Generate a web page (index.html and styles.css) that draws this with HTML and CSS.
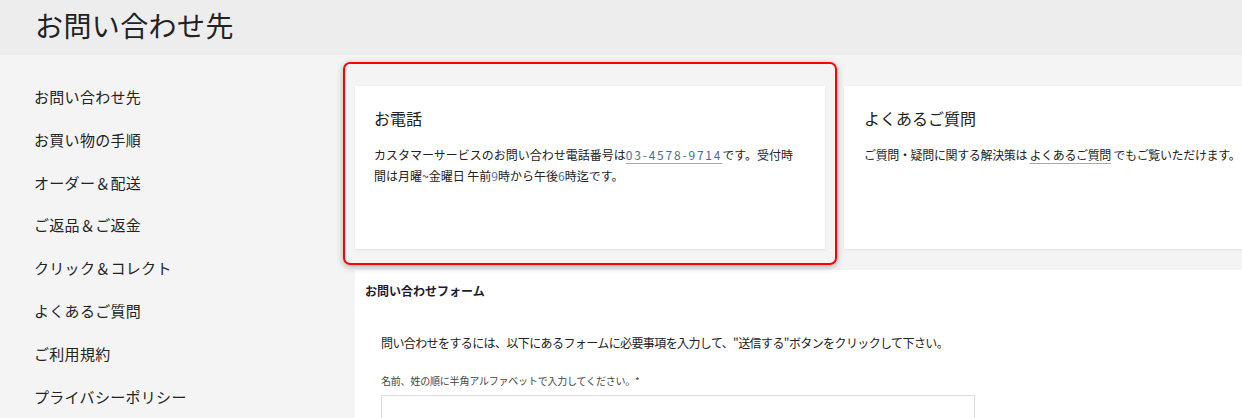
FILE: index.html
```html
<!DOCTYPE html>
<html lang="ja">
<head>
<meta charset="utf-8">
<title>お問い合わせ先</title>
<link rel="stylesheet" href="styles.css">
</head>
<body>
<header class="page-header">
  <h1 class="page-title">お問い合わせ先</h1>
</header>
<div class="layout">
  <nav class="sidebar">
    <ul class="side-list">
      <li class="side-item">お問い合わせ先</li>
      <li class="side-item">お買い物の手順</li>
      <li class="side-item">オーダー＆配送</li>
      <li class="side-item">ご返品＆ご返金</li>
      <li class="side-item">クリック＆コレクト</li>
      <li class="side-item">よくあるご質問</li>
      <li class="side-item">ご利用規約</li>
      <li class="side-item">プライバシーポリシー</li>
    </ul>
  </nav>
  <main class="main">
    <div class="cards">
      <section class="card card-phone">
        <h2 class="card-title">お電話</h2>
        <p class="card-text">カスタマーサービスのお問い合わせ電話番号は<a class="link tel">03-4578-9714</a>です。受付時間は月曜~金曜日 午前<span class="num">9</span>時から午後<span class="num">6</span>時迄です。</p>
      </section>
      <section class="card card-faq">
        <h2 class="card-title">よくあるご質問</h2>
        <p class="card-text faq-text">ご質問・疑問に関する解決策は <a class="link">よくあるご質問</a> でもご覧いただけます。</p>
      </section>
      <div class="highlight"></div>
    </div>
    <section class="form-area">
      <h3 class="form-title">お問い合わせフォーム</h3>
      <p class="form-intro">問い合わせをするには、以下にあるフォームに必要事項を入力して、"送信する"ボタンをクリックして下さい。</p>
      <label class="field-label">名前、姓の順に半角アルファベットで入力してください。*</label>
      <div class="field-input"></div>
    </section>
  </main>
</div>
</body>
</html>
```

FILE: styles.css
```css
html, body {
  margin: 0;
  padding: 0;
  overflow: hidden;
}
body {
  font-family: "Noto Sans CJK JP", "Noto Sans", sans-serif;
  color: #222;
  background: #f4f4f4;
  width: 1242px;
  height: 418px;
}
.page-header {
  height: 55px;
  background: #ededed;
  padding-left: 35px;
  box-sizing: border-box;
}
.page-title {
  margin: 0;
  font-size: 28px;
  font-weight: 400;
  line-height: 50px;
  color: #222;
  letter-spacing: 0.4px;
}
.layout {
  display: flex;
  height: 363px;
  overflow: hidden;
}
.sidebar {
  width: 355px;
  flex: none;
  background: #f4f4f4;
  overflow: hidden;
}
.side-list {
  list-style: none;
  margin: 0;
  padding: 20px 0 0 34px;
}
.side-item {
  font-size: 15px;
  line-height: 43px;
  height: 42.8px;
  color: #222;
  letter-spacing: 0.3px;
}
.main {
  flex: 1;
  min-width: 0;
  background: #f4f4f4;
}
.cards {
  position: relative;
  display: flex;
  gap: 19px;
  padding-top: 31px;
  height: 163px;
}
.card {
  flex: none;
  width: 470px;
  height: 163px;
  background: #fff;
  box-shadow: 0 1px 2px rgba(0,0,0,0.08);
  box-sizing: border-box;
  padding: 20px 19px 0;
}
.card-phone {
  padding-right: 26px;
}
.card-faq {
  padding-left: 20px;
}
.card-title {
  margin: 0;
  font-size: 16px;
  font-weight: 400;
  line-height: 24px;
  color: #222;
}
.card-text {
  margin: 14px 0 0;
  font-size: 12px;
  line-height: 21px;
  color: #222;
}
.faq-text {
  letter-spacing: -0.35px;
  white-space: nowrap;
}
.link {
  color: #222;
  text-decoration: underline;
  text-decoration-color: #aaa;
  text-underline-offset: 3px;
}
.tel {
  color: #50698f;
  letter-spacing: 1.8px;
}
.num {
  color: #4d74b3;
}
.highlight {
  position: absolute;
  left: -12px;
  top: 7px;
  width: 494px;
  height: 203px;
  box-sizing: border-box;
  border: 2px solid #f00;
  border-radius: 7px;
  box-shadow: 0 2px 7px rgba(0,0,0,0.28);
  pointer-events: none;
}
.form-area {
  margin-top: 21px;
  background: #fff;
  height: 148px;
  padding: 12px 0 0 10px;
  box-sizing: border-box;
  overflow: hidden;
}
.form-title {
  margin: 0;
  font-size: 12px;
  font-weight: 700;
  line-height: 18px;
  color: #221a2e;
}
.form-intro {
  margin: 34px 0 0 16px;
  font-size: 12px;
  line-height: 18px;
  color: #222;
  letter-spacing: -0.6px;
}
.field-label {
  display: block;
  margin: 22px 0 0 16px;
  font-size: 10px;
  line-height: 14px;
  color: #444;
  letter-spacing: -0.2px;
}
.field-input {
  margin: 7px 0 0 16px;
  width: 594px;
  height: 40px;
  border: 1px solid #ddd;
  box-sizing: border-box;
  background: #fff;
}
```
